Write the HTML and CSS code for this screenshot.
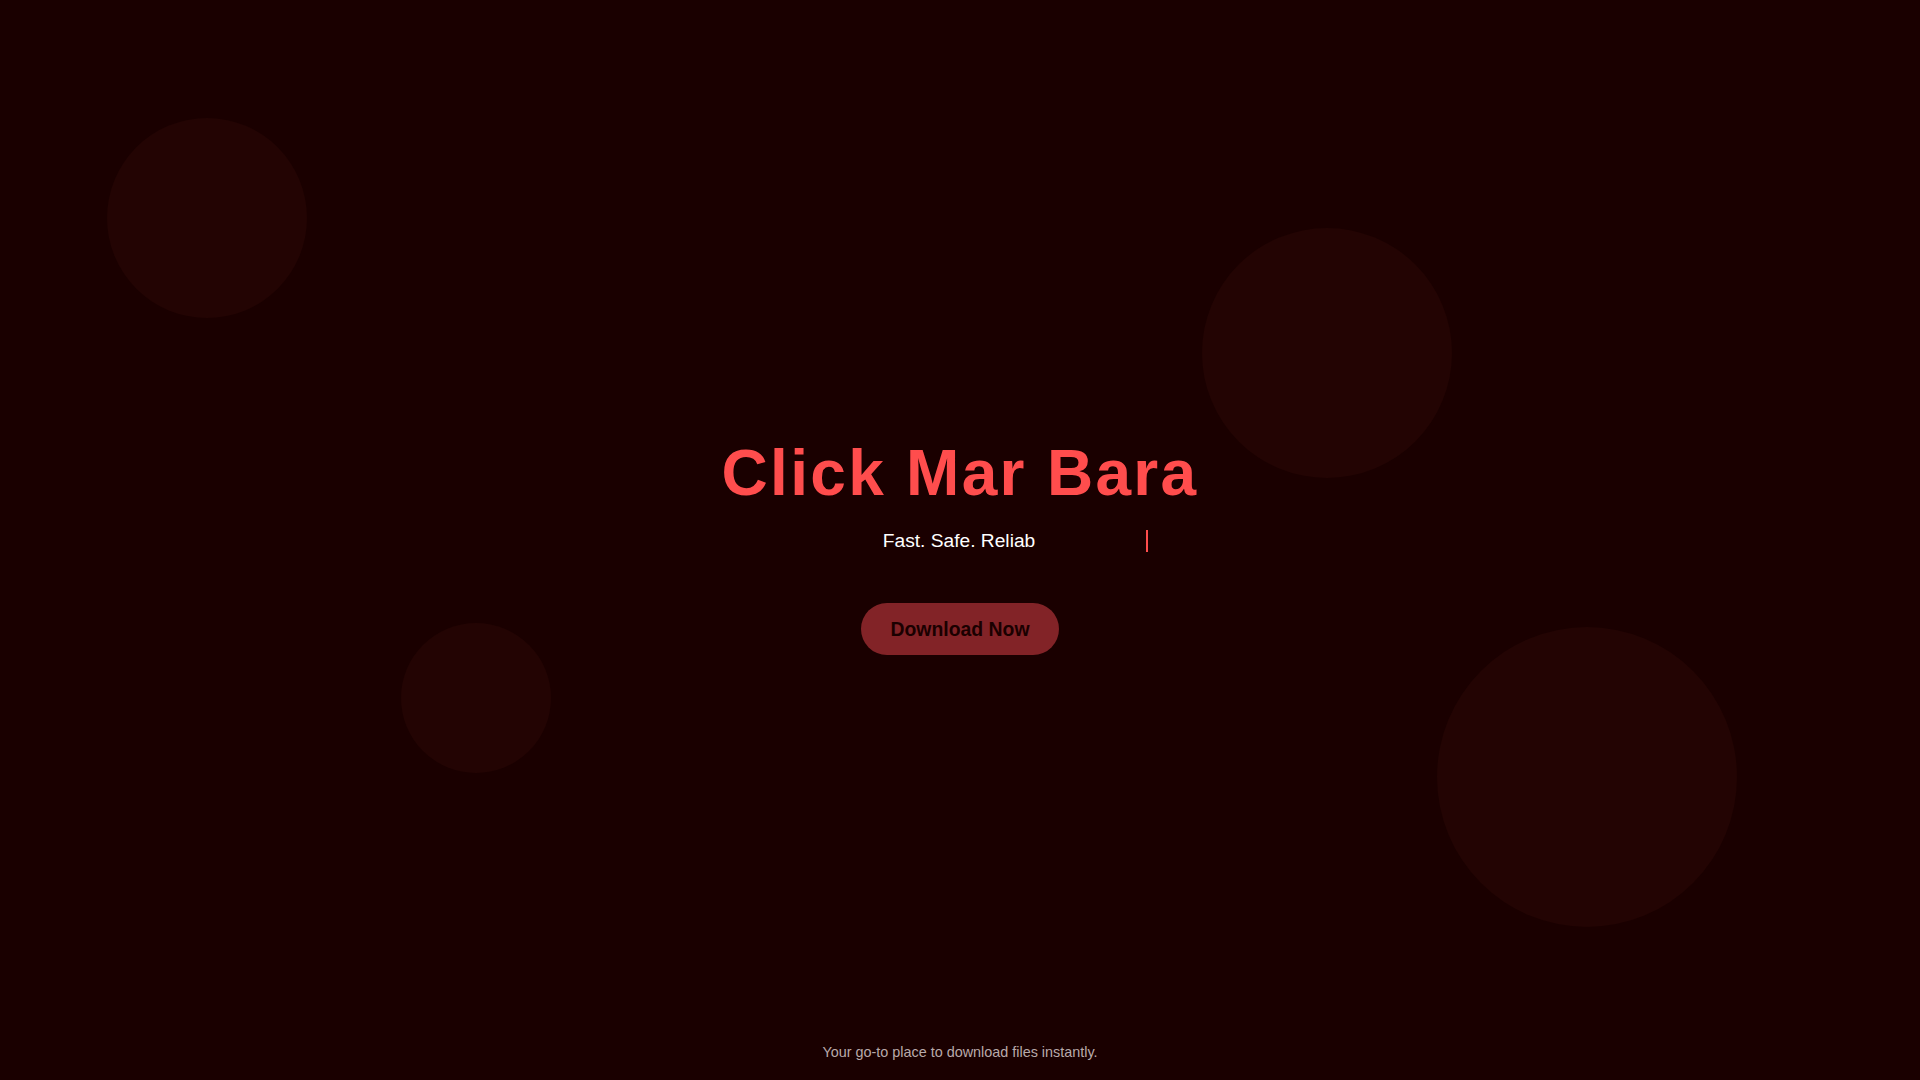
FILE: index.html
```html
<!DOCTYPE html>
<html lang="en">
<head>
<meta charset="utf-8">
<title>Click Mar Bara</title>
<link rel="stylesheet" href="styles.css">
</head>
<body>
  <div class="bubbles" aria-hidden="true">
    <span class="bubble b1"></span>
    <span class="bubble b2"></span>
    <span class="bubble b3"></span>
    <span class="bubble b4"></span>
  </div>
  <main class="hero">
    <h1 class="title">Click Mar Bara</h1>
    <p class="tagline"><span class="typed">Fast. Safe. Reliab</span></p>
    <a class="btn" href="#">Download Now</a>
  </main>
  <footer class="footer">Your go-to place to download files instantly.</footer>
</body>
</html>
```

FILE: styles.css
```css
html, body {
  margin: 0;
  padding: 0;
}
body {
  min-height: 100vh;
  background: #1a0000;
  font-family: "Liberation Sans", Arial, sans-serif;
  display: flex;
  flex-direction: column;
  overflow: hidden;
  position: relative;
}
.bubbles {
  position: absolute;
  inset: 0;
  pointer-events: none;
}
.bubble {
  position: absolute;
  border-radius: 50%;
  background: #230403;
}
.b1 { left: 107px; top: 118px; width: 200px; height: 200px; }
.b2 { left: 1202px; top: 228px; width: 250px; height: 250px; }
.b3 { left: 401px; top: 623px; width: 150px; height: 150px; }
.b4 { left: 1437px; top: 627px; width: 300px; height: 300px; }

.hero {
  flex: 1;
  display: flex;
  flex-direction: column;
  align-items: center;
  justify-content: center;
  padding-top: 47px;
  position: relative;
}
.title {
  margin: 0 0 20px;
  font-size: 64px;
  font-weight: bold;
  letter-spacing: 2.3px;
  color: #ff4d4d;
  line-height: normal;
}
.tagline {
  margin: 0 0 51px;
  font-size: 19.2px;
  color: #ffffff;
  line-height: 22px;
}
.typed {
  display: inline-block;
  box-sizing: border-box;
  width: 376px;
  text-align: center;
  white-space: nowrap;
  border-right: 2px solid #ff4d4d;
}
.btn {
  display: inline-block;
  padding: 15px 30px;
  font-size: 19.4px;
  line-height: 22px;
  font-weight: bold;
  color: #1a0000;
  background: #822327;
  border-radius: 50px;
  text-decoration: none;
}
.footer {
  position: relative;
  text-align: center;
  font-size: 14.4px;
  color: #b9aaaa;
  padding: 0 0 20px;
  line-height: 16px;
}
```
